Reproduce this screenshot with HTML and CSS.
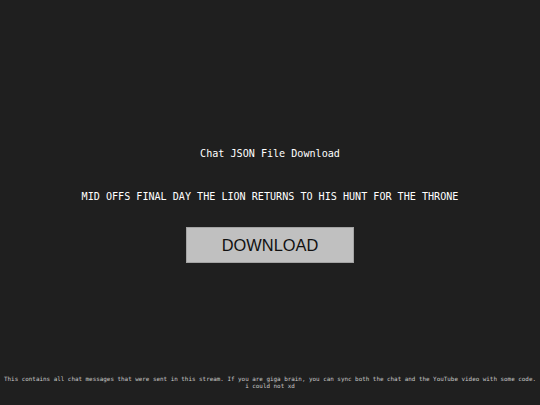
FILE: index.html
```html
<!DOCTYPE html>
<html lang="en">
<head>
<meta charset="utf-8">
<title>Chat JSON File Download</title>
<link rel="stylesheet" href="styles.css">
</head>
<body>
<main class="content">
  <p class="heading">Chat JSON File Download</p>
  <p class="stream-title">MID OFFS FINAL DAY THE LION RETURNS TO HIS HUNT FOR THE THRONE</p>
  <button class="download-btn" type="button">DOWNLOAD</button>
</main>
<footer class="note">This contains all chat messages that were sent in this stream. If you are giga brain, you can sync both the chat and the YouTube video with some code. i could not xd</footer>
</body>
</html>
```

FILE: styles.css
```css
html, body {
  margin: 0;
  padding: 0;
  height: 100%;
}

body {
  background: #1f1f1f;
  color: #ffffff;
  font-family: "DejaVu Sans Mono", monospace;
  display: flex;
  flex-direction: column;
  text-align: center;
}

.content {
  display: flex;
  flex-direction: column;
  align-items: center;
  padding-top: 148px;
}

.heading {
  margin: 0;
  font-size: 10.1px;
  line-height: 11.8px;
}

.stream-title {
  margin: 31.5px 0 0;
  font-size: 10.1px;
  line-height: 11.8px;
}

.download-btn {
  margin-top: 24px;
  width: 168px;
  height: 36px;
  background: #c0c0c0;
  border: 1px solid #a4a4a4;
  color: #111111;
  font-family: "Liberation Sans", Arial, sans-serif;
  font-size: 16.4px;
  padding: 0;
  cursor: pointer;
}

.note {
  margin-top: auto;
  padding: 0 2px 15.5px;
  font-size: 5.9px;
  line-height: 6.9px;
  color: #c8c8c8;
}
```
